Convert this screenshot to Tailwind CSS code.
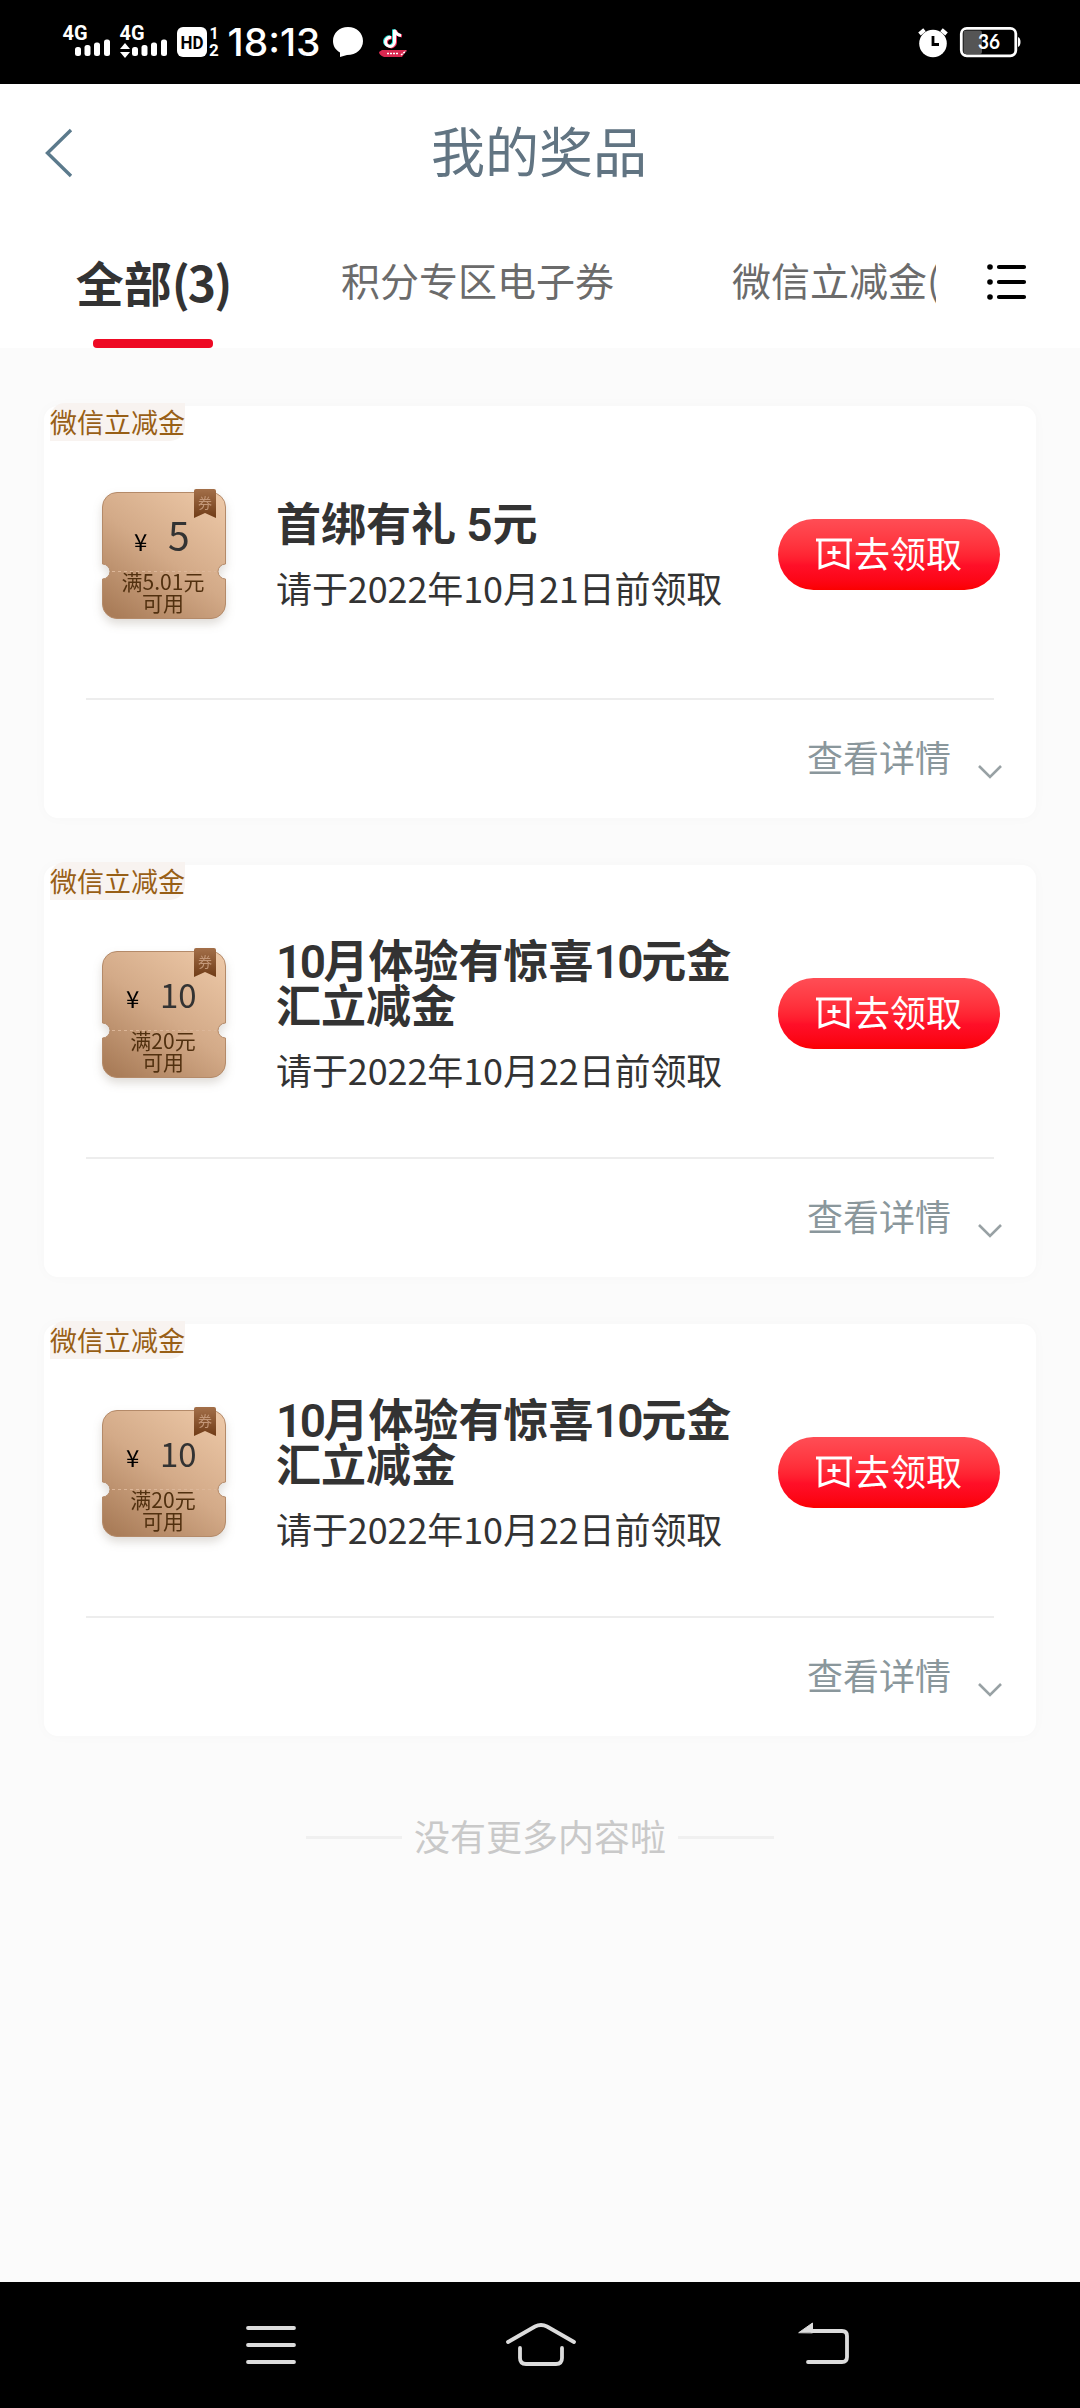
<!DOCTYPE html>
<html lang="zh-CN">
<head>
<meta charset="utf-8">
<title>我的奖品</title>
<script src="https://cdn.jsdelivr.net/npm/@tailwindcss/browser@4"></script>
</head>
<body class="w-[1080px] h-[2408px] flex flex-col overflow-hidden bg-[#fbfbfb] font-['Noto_Sans_CJK_SC',sans-serif] text-[#333]">

<!-- Icons and coupon shape shared by the cards -->
<svg class="absolute w-0 h-0">
  <defs>
    <linearGradient id="gold" x1="0.85" y1="0" x2="0.15" y2="1">
      <stop offset="0" stop-color="#ebc6a5"/><stop offset="0.5" stop-color="#d3aa88"/><stop offset="1" stop-color="#aa7d59"/>
    </linearGradient>
    <linearGradient id="brown" x1="0" y1="0" x2="0" y2="1">
      <stop offset="0" stop-color="#a36f49"/><stop offset="1" stop-color="#703c17"/>
    </linearGradient>
  </defs>
  <symbol id="coupon" viewBox="0 0 124 130">
    <path d="M15 3.5H109A14.500 14.500 0 0 1 123.500 18V75A7.500 7.500 0 0 0 123.500 90V115A14.500 14.500 0 0 1 109 129.500H15A14.500 14.500 0 0 1 .5 115V90A7.500 7.500 0 0 0 .5 75V18A14.500 14.500 0 0 1 15 3.500Z" fill="url(#gold)" stroke="#b48a69" stroke-width="1"/>
    <path d="M10 82.500H114" stroke="#dcb698" stroke-width="1" stroke-dasharray="3 3"/>
    <path d="M92 2Q92 0 94 0H112Q114 0 114 2V29L103 24L92 29Z" fill="url(#brown)"/>
  </symbol>
  <symbol id="claim" viewBox="0 0 36 34">
    <path d="M0 3H36M4 3V30.500L18 25.500L32 30.500V3M18 9V22M11.500 15.500H24.500" fill="none" stroke="#fff" stroke-width="3"/>
  </symbol>
  <symbol id="down" viewBox="0 0 26 16">
    <path d="M2 2L13 13L24 2" fill="none" stroke="#98a1a4" stroke-width="2.600"/>
  </symbol>
</svg>

<!-- Status bar -->
<div class="h-[84px] shrink-0 bg-black flex justify-between">
  <svg class="w-[420px] h-[84px]" viewBox="0 0 420 84" fill="#fff">
    <g font-family="Roboto" font-weight="700" font-size="21">
      <text x="62.500" y="40" textLength="25" lengthAdjust="spacingAndGlyphs">4G</text>
      <text x="119.500" y="40" textLength="25" lengthAdjust="spacingAndGlyphs">4G</text>
    </g>
    <rect x="75" y="47" width="6" height="9" rx="2.500"/><rect x="84.500" y="45" width="6" height="11" rx="2.500"/><rect x="94" y="42.500" width="6" height="13.500" rx="2.500"/><rect x="104" y="39.500" width="6" height="16.500" rx="2.500"/>
    <path d="M125 43L130 49H120ZM125 58L130 52H120Z"/>
    <rect x="132" y="47" width="6" height="9" rx="2.500"/><rect x="141.500" y="45" width="6" height="11" rx="2.500"/><rect x="151" y="42.500" width="6" height="13.500" rx="2.500"/><rect x="161" y="39.500" width="6" height="16.500" rx="2.500"/>
    <rect x="177" y="27" width="30" height="30" rx="6"/>
    <text x="180.500" y="49" font-family="Roboto" font-weight="700" font-size="19" fill="#000" textLength="23" lengthAdjust="spacingAndGlyphs">HD</text>
    <text x="209.500" y="38.500" font-family="Roboto" font-weight="700" font-size="16">1</text>
    <text x="209" y="56" font-family="Roboto" font-weight="700" font-size="17">2</text>
    <text x="227.500" y="55.500" font-family="Inter" font-weight="500" font-size="37.500" textLength="93" lengthAdjust="spacingAndGlyphs">18:13</text>
    <path d="M348 27C339.500 27 333 33 333 41C333 46 335.500 50 340 52.500V57L347 55C356.500 55 363 49 363 41C363 33 356.500 27 348 27Z"/>
    <g fill="none" stroke-width="3">
      <path d="M391 37.500A4.500 4.500 0 1 0 394.500 42V30C395.500 33.500 397.500 35 401 35.500" stroke="#25d9d5" transform="translate(-1 -.5)"/>
      <path d="M391 37.500A4.500 4.500 0 1 0 394.500 42V30C395.500 33.500 397.500 35 401 35.500" stroke="#f0305a" transform="translate(1 .5)"/>
      <path d="M391 37.500A4.500 4.500 0 1 0 394.500 42V30C395.500 33.500 397.500 35 401 35.500" stroke="#fff"/>
    </g>
    <path d="M382 50H407L402 57H384Q379 55 379 52Z" fill="#d92850"/>
    <path d="M387 53.500H399M401 55L406 51" stroke="#fff" stroke-width="1.500" stroke-dasharray="2 1"/>
  </svg>
  <svg class="w-[180px] h-[84px]" viewBox="900 0 180 84" fill="#fff">
    <circle cx="933" cy="43.500" r="13.800"/>
    <path d="M919.500 34L924.500 29.800M946.500 34L941.500 29.800" stroke="#fff" stroke-width="4"/>
    <path d="M933 36V44.500H939" stroke="#000" stroke-width="2.800" fill="none"/>
    <rect x="961.300" y="28.300" width="54.500" height="27.500" rx="5.500" fill="none" stroke="#fff" stroke-width="2.800"/>
    <rect x="963.500" y="30.500" width="18.500" height="23.500" rx="2" fill="#555"/>
    <path d="M1018 37Q1020.500 38 1020.500 42T1018 47Z"/>
    <text x="978" y="49" font-family="Lato" font-weight="700" font-size="20" textLength="22" lengthAdjust="spacingAndGlyphs">36</text>
  </svg>
</div>

<!-- Header and tabs -->
<header class="bg-white shrink-0 h-[264px] flex flex-col">
  <div class="h-[138px] pl-[45px] flex items-center">
    <svg class="w-[28px] h-[50px]" viewBox="0 0 28 50"><path d="M26 2L2.500 25L26 48" fill="none" stroke="#5b7a8c" stroke-width="3.400"/></svg>
    <h1 class="w-[932px] pb-[6px] text-center text-[54px] leading-[80px] text-[#617482]">我的奖品</h1>
  </div>
  <div class="flex-1 flex">
    <div class="w-[306px] flex flex-col items-center justify-between">
      <div class="pt-[19px] text-[48px] leading-[80px] font-bold text-[#333]">全部<span class="tracking-[-2px]">(3)</span></div>
      <div class="w-[120px] h-[9px] rounded-[4px] bg-[#ee0a24]"></div>
    </div>
    <div class="w-[630px] pl-[35px] flex gap-[118px] overflow-hidden whitespace-nowrap text-[39px] leading-[60px] pt-[27px] text-[#6b6b6b]">
      <span>积分专区电子券</span><span>微信立减金(2)</span>
    </div>
    <svg class="ml-[50px] mt-[41px] w-[42px] h-[38px]" viewBox="0 0 42 38">
      <g><circle cx="4" cy="4" r="2.800"/><circle cx="4" cy="19" r="2.800"/><circle cx="4" cy="34" r="2.800"/></g>
      <path d="M13 4H38M13 19H38M13 34H38" stroke="#000" stroke-width="4.200" stroke-linecap="round"/>
    </svg>
  </div>
</header>

<!-- Prize list -->
<main class="flex-1 px-[44px] pt-[58px] flex flex-col">
  <div class="flex flex-col gap-[47px]">

    <section class="relative h-[412px] rounded-[14px] bg-white shadow-[0_0_14px_rgba(0,0,0,0.025)] flex flex-col">
      <span class="absolute left-[6px] top-[-3px] h-[38px] w-[135px] rounded-tl-[15px] rounded-br-[15px] bg-[#f8f3f0] text-[27px] leading-[38px] text-[#985f16]">微信立减金</span>
      <div class="h-[292px] pt-[4px] pl-[58px] pr-[36px] flex items-center">
        <div class="relative w-[124px] h-[130px] drop-shadow-[0_5px_5px_rgba(80,60,40,0.18)]">
          <svg class="absolute inset-0 w-[124px] h-[130px]"><use href="#coupon"/></svg>
          <span class="absolute left-[96px] top-[5px] text-[14px] leading-[16px] text-[#c39778]">券</span>
          <div class="relative h-[82px] pt-[25px] pl-[32px] flex items-baseline leading-[40px] text-black"><span class="w-[34px] text-[24px]">¥</span><span class="text-[39px] text-[#333]">5</span></div>
          <div class="relative -left-px text-center text-[21px] leading-[21px] text-[#51300f]">满5.01元<br>可用</div>
        </div>
        <div class="ml-[50px] w-[460px] pt-[5px]">
          <h2 class="text-[45px] leading-[45px] font-bold">首绑有礼 <span class="font-['Roboto'] font-semibold text-[46px] leading-[1px]">5</span>元</h2>
          <p class="mt-[16px] text-[36px] leading-[54px] tracking-[-0.1px]">请于2022年10月21日前领取</p>
        </div>
        <button class="ml-auto w-[222px] h-[71px] rounded-full bg-linear-to-b from-[#ff4d55] via-[#ff0f28] via-65% to-[#fb0000] flex items-center justify-center gap-[2px] text-white text-[36px] leading-[60px]"><svg class="w-[36px] h-[34px]"><use href="#claim"/></svg><span class="pb-[5px]">去领取</span></button>
      </div>
      <div class="mx-[42px] h-[2px] bg-[#ededed]"></div>
      <div class="flex-1 pl-[763px] flex items-center text-[36px] text-[#8a979c]"><span class="pb-[6px]">查看详情</span><svg class="ml-[26px] mt-[26px] w-[26px] h-[16px]"><use href="#down"/></svg></div>
    </section>

    <section class="relative h-[412px] rounded-[14px] bg-white shadow-[0_0_14px_rgba(0,0,0,0.025)] flex flex-col">
      <span class="absolute left-[6px] top-[-3px] h-[38px] w-[135px] rounded-tl-[15px] rounded-br-[15px] bg-[#f8f3f0] text-[27px] leading-[38px] text-[#985f16]">微信立减金</span>
      <div class="h-[292px] pt-[4px] pl-[58px] pr-[36px] flex items-center">
        <div class="relative w-[124px] h-[130px] drop-shadow-[0_5px_5px_rgba(80,60,40,0.18)]">
          <svg class="absolute inset-0 w-[124px] h-[130px]"><use href="#coupon"/></svg>
          <span class="absolute left-[96px] top-[5px] text-[14px] leading-[16px] text-[#c39778]">券</span>
          <div class="relative h-[82px] pt-[26px] pl-[24px] flex items-baseline leading-[40px] text-black"><span class="w-[34px] text-[24px]">¥</span><span class="text-[33px] text-[#333]">10</span></div>
          <div class="relative -left-px text-center text-[21px] leading-[21px] text-[#51300f]">满20元<br>可用</div>
        </div>
        <div class="ml-[50px] w-[460px] pt-[6px]">
          <h2 class="text-[45px] leading-[45px] font-bold"><span class="font-['Roboto'] font-semibold text-[46px] leading-[1px] tracking-[-2.5px]">10</span>月体验有惊喜<span class="font-['Roboto'] font-semibold text-[46px] leading-[1px] tracking-[-2.5px]">10</span>元金<br>汇立减金</h2>
          <p class="mt-[16px] text-[36px] leading-[54px] tracking-[-0.1px]">请于2022年10月22日前领取</p>
        </div>
        <button class="ml-auto w-[222px] h-[71px] rounded-full bg-linear-to-b from-[#ff4d55] via-[#ff0f28] via-65% to-[#fb0000] flex items-center justify-center gap-[2px] text-white text-[36px] leading-[60px]"><svg class="w-[36px] h-[34px]"><use href="#claim"/></svg><span class="pb-[5px]">去领取</span></button>
      </div>
      <div class="mx-[42px] h-[2px] bg-[#ededed]"></div>
      <div class="flex-1 pl-[763px] flex items-center text-[36px] text-[#8a979c]"><span class="pb-[6px]">查看详情</span><svg class="ml-[26px] mt-[26px] w-[26px] h-[16px]"><use href="#down"/></svg></div>
    </section>

    <section class="relative h-[412px] rounded-[14px] bg-white shadow-[0_0_14px_rgba(0,0,0,0.025)] flex flex-col">
      <span class="absolute left-[6px] top-[-3px] h-[38px] w-[135px] rounded-tl-[15px] rounded-br-[15px] bg-[#f8f3f0] text-[27px] leading-[38px] text-[#985f16]">微信立减金</span>
      <div class="h-[292px] pt-[4px] pl-[58px] pr-[36px] flex items-center">
        <div class="relative w-[124px] h-[130px] drop-shadow-[0_5px_5px_rgba(80,60,40,0.18)]">
          <svg class="absolute inset-0 w-[124px] h-[130px]"><use href="#coupon"/></svg>
          <span class="absolute left-[96px] top-[5px] text-[14px] leading-[16px] text-[#c39778]">券</span>
          <div class="relative h-[82px] pt-[26px] pl-[24px] flex items-baseline leading-[40px] text-black"><span class="w-[34px] text-[24px]">¥</span><span class="text-[33px] text-[#333]">10</span></div>
          <div class="relative -left-px text-center text-[21px] leading-[21px] text-[#51300f]">满20元<br>可用</div>
        </div>
        <div class="ml-[50px] w-[460px] pt-[6px]">
          <h2 class="text-[45px] leading-[45px] font-bold"><span class="font-['Roboto'] font-semibold text-[46px] leading-[1px] tracking-[-2.5px]">10</span>月体验有惊喜<span class="font-['Roboto'] font-semibold text-[46px] leading-[1px] tracking-[-2.5px]">10</span>元金<br>汇立减金</h2>
          <p class="mt-[16px] text-[36px] leading-[54px] tracking-[-0.1px]">请于2022年10月22日前领取</p>
        </div>
        <button class="ml-auto w-[222px] h-[71px] rounded-full bg-linear-to-b from-[#ff4d55] via-[#ff0f28] via-65% to-[#fb0000] flex items-center justify-center gap-[2px] text-white text-[36px] leading-[60px]"><svg class="w-[36px] h-[34px]"><use href="#claim"/></svg><span class="pb-[5px]">去领取</span></button>
      </div>
      <div class="mx-[42px] h-[2px] bg-[#ededed]"></div>
      <div class="flex-1 pl-[763px] flex items-center text-[36px] text-[#8a979c]"><span class="pb-[6px]">查看详情</span><svg class="ml-[26px] mt-[26px] w-[26px] h-[16px]"><use href="#down"/></svg></div>
    </section>
  </div>

  <div class="mt-[73px] flex items-center justify-center gap-[12px] text-[36px] leading-[60px] text-[#c9c9c9]">
    <i class="w-[96px] h-[3px] bg-[#f0f0f0]"></i><span class="-mt-[4px]">没有更多内容啦</span><i class="w-[96px] h-[3px] bg-[#f0f0f0]"></i>
  </div>
</main>

<!-- System navigation -->
<nav class="h-[126px] shrink-0 bg-black">
  <svg class="w-[1080px] h-[126px]" viewBox="0 2282 1080 126" fill="none" stroke="#dcdcdc" stroke-width="3.800" stroke-linecap="round">
    <path d="M248 2328H294M248 2345H294M248 2362H294"/>
    <path d="M508 2342L535 2326.500Q541 2323.500 547 2326.500L574 2342"/>
    <path d="M520 2348V2358Q520 2364 526 2364H556Q562 2364 562 2358V2348"/>
    <path d="M812 2331H842Q847 2331 847 2336V2357Q847 2362 842 2362H808"/>
    <path d="M799 2332.500L812.500 2323V2332.500Z" fill="#dcdcdc" stroke-width="1"/>
  </svg>
</nav>
</body>
</html>
